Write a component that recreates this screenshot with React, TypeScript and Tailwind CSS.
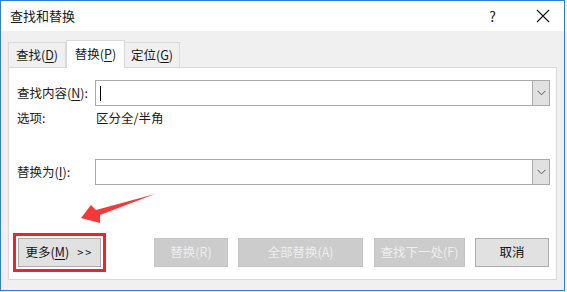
const FONT = { fontFamily: '"Microsoft YaHei UI", "Noto Sans CJK SC", "Noto Sans", sans-serif' };

function Key({ k }: { k: string }) {
  return <span className="underline underline-offset-2">{k}</span>;
}

function Combo({ caret }: { caret?: boolean }) {
  return (
    <div className="flex h-[26px] flex-1 border border-[#a9a9a9] bg-white">
      <div className="flex flex-1 items-center pl-[4px]">
        {caret && <span className="block h-[15px] w-px bg-black" />}
      </div>
      <div className="flex w-[17px] items-center justify-center border-l border-[#adadad] bg-[#e1e1e1]">
        <svg width="9" height="6" viewBox="0 0 9 6">
          <path d="M0.5 0.8 L4.5 4.8 L8.5 0.8" fill="none" stroke="#555" strokeWidth="1" />
        </svg>
      </div>
    </div>
  );
}

function Btn({ children, disabled, className = '' }: { children: React.ReactNode; disabled?: boolean; className?: string }) {
  return (
    <div
      className={
        'flex h-[29px] items-center justify-center border text-[12.5px] ' +
        (disabled
          ? 'border-[#c4c4c4] bg-[#cccccc] text-[#eeeeee] '
          : 'border-[#adadad] bg-[#e1e1e1] text-[#111] ') +
        className
      }
    >
      {children}
    </div>
  );
}

export default function App() {
  return (
    <div className="h-[292px] w-[567px] overflow-hidden bg-[#f4f4f4]" style={FONT}>
      <div className="flex h-[291px] w-[565px] flex-col border border-[#2b7fd8] bg-[#f0f0f0] text-[#1a1a1a]">
        <div className="flex h-[30px] items-center bg-white pl-[9px] text-[13px]">
          <span>查找和替换</span>
          <span className="ml-auto mr-[40px] text-[14px]">?</span>
          <svg width="14" height="14" viewBox="0 0 14 14" className="mr-[14px]">
            <path d="M1 1 L13 13 M13 1 L1 13" stroke="#111" strokeWidth="1.1" />
          </svg>
        </div>

        <div className="flex flex-1 flex-col px-[7px] pt-[9px]">
          <div className="flex h-[27px] items-end text-[12.5px]">
            <div className="flex h-[25px] w-[58px] items-center justify-center border border-b-0 border-[#d9d9d9] bg-[#f0f0f0]">
              查找(<Key k="D" />)
            </div>
            <div className="relative z-10 -mb-px flex h-[28px] w-[59px] items-center justify-center border border-b-0 border-[#d9d9d9] bg-white">
              替换(<Key k="P" />)
            </div>
            <div className="flex h-[25px] w-[55px] items-center justify-center border border-b-0 border-l-0 border-[#d9d9d9] bg-[#f0f0f0]">
              定位(<Key k="G" />)
            </div>
          </div>

          <div className="flex h-[213px] w-[549px] flex-col border border-[#d9d9d9] bg-white pl-[8px] pr-[6px] pt-[12px] text-[12.5px]">
            <div className="flex items-center">
              <span className="w-[78px]">
                查找内容(<Key k="N" />):
              </span>
              <Combo caret />
            </div>
            <div className="mt-[3px] flex h-[18px] items-center">
              <span className="w-[79px]">选项:</span>
              <span>区分全/半角</span>
            </div>
            <div className="mt-[32px] flex items-center">
              <span className="w-[78px]">
                替换为(<Key k="I" />):
              </span>
              <Combo />
            </div>

            <div className="relative h-[48px]">
              <svg width="90" height="36" viewBox="0 0 90 36" className="absolute left-[55px] top-[7px]">
                <polygon points="9,26 19,13 24,18 83,2 28,23 28,31" fill="#f33a3a" />
              </svg>
            </div>

            <div className="flex items-center">
              <div className="-ml-[4px] border-[3px] border-[#e8262b] p-[2px]">
                <Btn className="w-[83px] gap-[8px]">
                  <span>
                    更多(<Key k="M" />)
                  </span>
                  <span className="text-[11px] tracking-[2px]">&gt;&gt;</span>
                </Btn>
              </div>
              <Btn disabled className="ml-[48px] w-[74px]">替换(R)</Btn>
              <Btn disabled className="ml-[10px] w-[125px]">全部替换(A)</Btn>
              <Btn disabled className="ml-[11px] w-[91px]">查找下一处(F)</Btn>
              <Btn className="ml-[10px] w-[74px]">取消</Btn>
            </div>
          </div>
        </div>
      </div>
    </div>
  );
}
